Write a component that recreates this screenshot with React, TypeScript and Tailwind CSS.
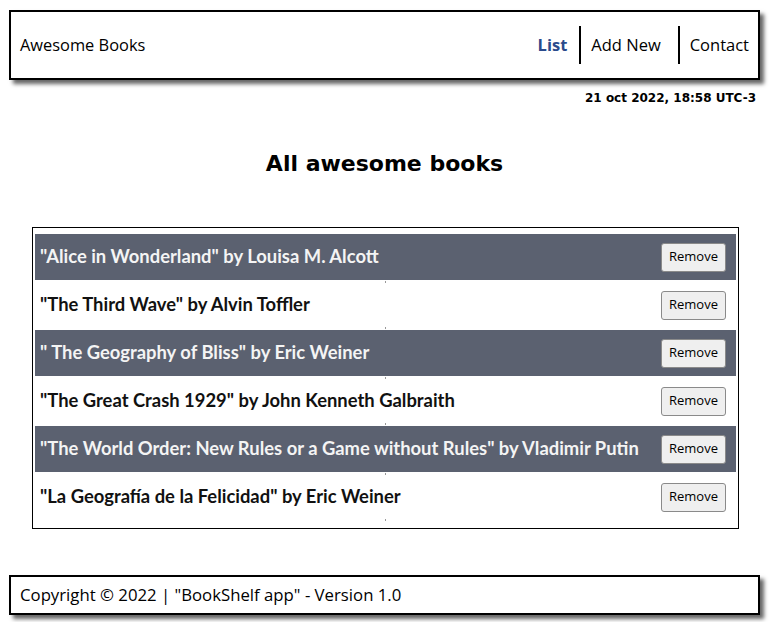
const books = [
  { title: "Alice in Wonderland", author: "Louisa M. Alcott" },
  { title: "The Third Wave", author: "Alvin Toffler" },
  { title: " The Geography of Bliss", author: "Eric Weiner" },
  { title: "The Great Crash 1929", author: "John Kenneth Galbraith" },
  { title: "The World Order: New Rules or a Game without Rules", author: "Vladimir Putin" },
  { title: "La Geografía de la Felicidad", author: "Eric Weiner" },
];

export default function App() {
  return (
    <div className="min-h-[622px] bg-white text-black font-['Open_Sans',sans-serif]">
      <header className="mx-[9px] mt-[10px] flex h-[70px] items-center justify-between border-2 border-black bg-white pl-[9px] pr-[9px] shadow-[4px_4px_4px_#666]">
        <span className="text-[16.4px]">Awesome Books</span>
        <nav className="flex items-center text-[16.5px]">
          <a className="pr-[12px] font-bold text-[#2a4a8c]">List</a>
          <a className="flex h-[38px] items-center border-l-2 border-black pl-[10px] pr-[17px]">Add New</a>
          <a className="flex h-[38px] items-center border-l-2 border-black pl-[10px]">Contact</a>
        </nav>
      </header>

      <p className="mt-[9px] pr-[13px] text-right font-['DejaVu_Sans',sans-serif] text-[12px] font-bold">
        21 oct 2022, 18:58 UTC-3
      </p>

      <h1 className="mt-[40px] text-center font-['DejaVu_Sans',sans-serif] text-[22px] font-bold">
        All awesome books
      </h1>

      <ul className="ml-[32px] mr-[30px] mt-[47px] border border-black px-[2px] py-[6px] font-['Lato',sans-serif]">
        {books.map((b, i) => {
          const dark = i % 2 === 0;
          return (
            <li
              key={i}
              className={
                dark
                  ? "flex h-[46px] items-center justify-between bg-[#5b6170] pl-[5px] pr-[10px] text-[#f4f4f4]"
                  : "relative flex h-[50px] items-center justify-between pl-[5px] pr-[10px] text-[#111]"
              }
            >
              <span className="whitespace-nowrap text-[18.4px] font-bold">
                "{b.title}" by {b.author}
              </span>
              <button className="h-[29px] w-[65px] shrink-0 rounded-[3px] border border-[#8a8a8a] bg-[#efefef] font-['Open_Sans',sans-serif] text-[13px] text-black">
                Remove
              </button>
              {!dark && (
                <>
                  <span className="absolute left-[350px] top-[1px] h-[2px] w-px bg-[#999]" />
                  <span className="absolute bottom-[1px] left-[350px] h-[2px] w-px bg-[#999]" />
                </>
              )}
            </li>
          );
        })}
      </ul>

      <footer className="mx-[9px] mt-[46px] flex h-[40px] items-center border-2 border-black bg-white pl-[9px] text-[16.75px] shadow-[4px_4px_4px_#666]">
        Copyright © 2022 | "BookShelf app" - Version 1.0
      </footer>
    </div>
  );
}
